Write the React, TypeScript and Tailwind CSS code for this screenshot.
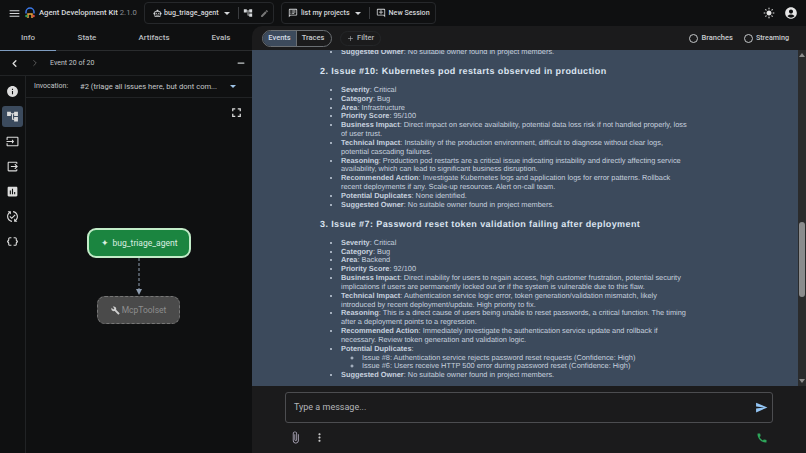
import { ChevronLeft, ChevronRight, Minus, Plus } from 'lucide-react';
import { MdAccountCircle, MdAccountTree, MdAssessment, MdAttachFile, MdBuild, MdCall, MdDataObject, MdEdit, MdFullscreen, MdInfo, MdInput, MdLightMode, MdMenu, MdMoreVert, MdOutlineAddComment, MdOutlineSmartToy, MdOutlineSpeakerNotes, MdOutput, MdPublishedWithChanges, MdSend } from 'react-icons/md';
import type { FC, ReactNode } from 'react';

const Caret: FC<{ className?: string }> = ({ className = '' }) => (
  <span className={`w-0 h-0 border-x-[3px] border-x-transparent border-t-[3px] border-t-current ${className}`} />
);

const Item: FC<{ label: string; text?: string; children?: ReactNode }> = ({ label, text, children }) => (
  <li className="whitespace-pre">
    <b className="font-bold">{label}</b>
    {text ? `: ${text}` : ':'}
    {children}
  </li>
);

const issue10 = [
  ['Severity', 'Critical'],
  ['Category', 'Bug'],
  ['Area', 'Infrastructure'],
  ['Priority Score', '95/100'],
  ['Business Impact', 'Direct impact on service availability, potential data loss risk if not handled properly, loss\nof user trust.'],
  ['Technical Impact', 'Instability of the production environment, difficult to diagnose without clear logs,\npotential cascading failures.'],
  ['Reasoning', 'Production pod restarts are a critical issue indicating instability and directly affecting service\navailability, which can lead to significant business disruption.'],
  ['Recommended Action', 'Investigate Kubernetes logs and application logs for error patterns. Rollback\nrecent deployments if any. Scale-up resources. Alert on-call team.'],
  ['Potential Duplicates', 'None identified.'],
  ['Suggested Owner', 'No suitable owner found in project members.'],
];

const issue7 = [
  ['Severity', 'Critical'],
  ['Category', 'Bug'],
  ['Area', 'Backend'],
  ['Priority Score', '92/100'],
  ['Business Impact', 'Direct inability for users to regain access, high customer frustration, potential security\nimplications if users are permanently locked out or if the system is vulnerable due to this flaw.'],
  ['Technical Impact', 'Authentication service logic error, token generation/validation mismatch, likely\nintroduced by recent deployment/update. High priority to fix.'],
  ['Reasoning', 'This is a direct cause of users being unable to reset passwords, a critical function. The timing\nafter a deployment points to a regression.'],
  ['Recommended Action', 'Immediately investigate the authentication service update and rollback if\nnecessary. Review token generation and validation logic.'],
];

const TopBar = () => (
  <header className="h-[26px] flex items-center text-[#d5d7da] text-[7.7px] font-medium whitespace-nowrap">
    <MdMenu size={13} className="ml-2" />
    <svg width="12" height="12" viewBox="0 0 12 12" fill="none" className="ml-[3px]">
      <path d="M2 6.5V5a4 4 0 0 1 8 0v1.5" stroke="#3b78e7" strokeWidth="1.5" />
      <path d="M4 11V7h4v4" stroke="#e8a33d" strokeWidth="1.5" />
      <circle cx="2.5" cy="9" r="1.3" fill="#2f9e5b" />
      <circle cx="9.5" cy="9" r="1.3" fill="#d64c42" />
    </svg>
    <span className="ml-[3px] w-[105px]">Agent Development Kit <span className="text-[#8b8f94] font-normal">2.1.0</span></span>
    <div className="w-[130px] h-[22px] shrink-0 border border-[#26282b] rounded-[4px] flex items-center pl-[8px] text-[7.1px]">
      <MdOutlineSmartToy size={9} />
      <span className="ml-[2px]">bug_triage_agent</span>
      <Caret className="ml-[5px]" />
      <span className="w-px h-3 bg-[#3a3c3f] ml-[8px]" />
      <MdAccountTree size={10} className="ml-[4px]" />
      <MdEdit size={9} className="ml-[7px] text-[#777]" />
    </div>
    <div className="ml-[7px] w-[155px] h-[22px] shrink-0 border border-[#26282b] rounded-[4px] flex items-center pl-[6px] text-[7.1px]">
      <MdOutlineSpeakerNotes size={10} />
      <span className="ml-[3px]">list my projects</span>
      <Caret className="ml-[5px]" />
      <span className="w-px h-3 bg-[#3a3c3f] ml-[8px]" />
      <MdOutlineAddComment size={10} className="ml-[6px]" />
      <span className="ml-[3px]">New Session</span>
    </div>
    <MdLightMode size={12} className="ml-auto mr-[9px] text-[#e6e6e6]" />
    <MdAccountCircle size={14} className="mr-[8px] text-[#e6e6e6]" />
  </header>
);

const railIcons = [MdInfo, MdAccountTree, MdInput, MdOutput, MdAssessment, MdPublishedWithChanges, MdDataObject];

const LeftPanel = () => (
  <aside className="w-[252px] shrink-0 flex flex-col text-[#c4c7c9]">
    <nav className="h-[25px] flex items-center text-[8px] font-medium border-b border-[#2a2c2e] relative text-[#b9bcbf]">
      <span className="w-[56px] text-center">Info</span>
      <span className="w-[62px] text-center">State</span>
      <span className="w-[72px] text-center">Artifacts</span>
      <span className="w-[62px] text-center">Evals</span>
      <span className="absolute left-0 -bottom-px w-[56px] h-px bg-[#7e9cc0]" />
    </nav>
    <div className="h-[25px] flex items-center border-b border-[#212325]">
      <ChevronLeft size={11} strokeWidth={3} className="ml-[9px] text-[#dcdcdc]" />
      <ChevronRight size={10} className="ml-[10px] text-[#666]" />
      <span className="ml-[10px] text-[7px]">Event 20 of 20</span>
      <Minus size={10} strokeWidth={3} className="ml-auto mr-[6px]" />
    </div>
    <div className="flex-1 flex">
      <div className="w-[26px] border-r border-[#212325] flex flex-col items-center pt-[5px] gap-1">
        {railIcons.map((Icon, i) => (
          <span key={i} className={`w-[21px] h-[21px] flex items-center justify-center rounded-[3px] text-[#dcdcdc] ${i === 1 ? 'bg-[#3b4a5d]' : ''}`}>
            <Icon size={13} />
          </span>
        ))}
      </div>
      <div className="flex-1 flex flex-col min-w-0">
        <div className="h-[22px] flex items-center border-b border-[#212325] text-[7px]">
          <span className="ml-2 w-[46px]">Invocation:</span>
          <span className="text-[7.6px] whitespace-nowrap">#2 (triage all issues here, but dont com...</span>
          <Caret className="ml-auto mr-4 text-[#9ec3e8]" />
        </div>
        <div className="flex-1 flex flex-col relative pt-[130px]">
          <MdFullscreen size={15} className="absolute top-[7px] right-[8px] text-[#dcdcdc]" />
          <div className="ml-[61px] w-[104px] h-[30px] rounded-[9px] bg-[#1b8540] border-[2.5px] border-[#c2ecc8] flex items-center justify-center gap-1 text-[8.5px] text-[#dcefe0]">
            <span className="text-[9px] leading-none">✦</span>bug_triage_agent
          </div>
          <svg width="8" height="38" viewBox="0 0 8 38" className="ml-[109px]">
            <path d="M4 0V33" stroke="#8f9db0" strokeWidth="1" strokeDasharray="3 2" />
            <path d="M1 31l3 6 3-6z" fill="#8f9db0" />
          </svg>
          <div className="ml-[71px] w-[83px] h-[28px] rounded-[8px] bg-[#4a4a4a] border border-dashed border-[#777] flex items-center justify-center gap-0.5 text-[8.5px] text-[#8d8d8d]">
            <MdBuild size={9} className="text-[#cfcfcf]" />McpToolset
          </div>
        </div>
      </div>
    </div>
  </aside>
);

const MainPanel = () => (
  <main className="flex-1 min-w-0 flex flex-col bg-[#1b1b1c] rounded-tl-[10px] overflow-hidden">
    <div className="h-[24px] shrink-0 flex items-center text-[7.5px] font-medium text-[#c9cccf]">
      <div className="ml-[10px] h-[17px] flex items-center border border-[#6b6f73] rounded-full overflow-hidden">
        <span className="h-full w-[34px] flex items-center justify-center bg-[#3c4a5c] border-r border-[#6b6f73] text-[#d6dde6]">Events</span>
        <span className="w-[34px] text-center pr-[2px]">Traces</span>
      </div>
      <span className="ml-2 h-[15px] px-[6px] rounded-full border border-[#242628] flex items-center gap-[3px] text-[#b0b3b6]"><Plus size={7} />Filter</span>
      <span className="ml-auto w-[9px] h-[9px] rounded-full border border-[#c4c7c9]" />
      <span className="ml-[3px]">Branches</span>
      <span className="ml-[11px] w-[9px] h-[9px] rounded-full border border-[#c4c7c9]" />
      <span className="ml-[3px] mr-[17px] text-[7.2px]">Streaming</span>
    </div>
    <div className="h-[336px] shrink-0 flex">
      <div className="flex-1 min-w-0 overflow-hidden bg-[#3c4a5c] text-[#c6d0de] text-[7.38px] leading-[8.85px] [text-rendering:geometricPrecision]" style={{ fontFamily: '"Liberation Sans", sans-serif' }}>
        <div className="-mt-[2px] pl-[68px] pr-[107px]">
          <ul className="list-disc pl-[21px]">
            <Item label="Suggested Owner" text="No suitable owner found in project members." />
          </ul>
          <h3 className="mt-[9px] mb-[9px] font-bold text-[9px] leading-[11px] tracking-[0.4px] text-[#dbe4f0]">2. Issue #10: Kubernetes pod restarts observed in production</h3>
          <ul className="list-disc pl-[21px]">
            {issue10.map(([l, t]) => <Item key={l} label={l} text={t} />)}
          </ul>
          <h3 className="mt-[9px] mb-[9px] font-bold text-[9px] leading-[11px] tracking-[0.4px] text-[#dbe4f0]">3. Issue #7: Password reset token validation failing after deployment</h3>
          <ul className="list-disc pl-[21px]">
            {issue7.map(([l, t]) => <Item key={l} label={l} text={t} />)}
            <Item label="Potential Duplicates">
              <ul className="list-[circle] pl-[21px]">
                <li>Issue #8: Authentication service rejects password reset requests (Confidence: High)</li>
                <li>Issue #6: Users receive HTTP 500 error during password reset (Confidence: High)</li>
              </ul>
            </Item>
            <Item label="Suggested Owner" text="No suitable owner found in project members." />
          </ul>
          <hr className="mt-[6px] border-[#b7bec7]" />
        </div>
      </div>
      <div className="w-[8px] shrink-0 bg-[#2a2b2c] flex flex-col items-center relative">
        <span className="mt-[3px] border-x-[3px] border-x-transparent border-b-[4px] border-b-[#8c8c8c]" />
        <span className="absolute top-[172px] left-[1px] w-[6px] h-[75px] rounded-sm bg-[#8b8c8d]" />
        <span className="mt-auto mb-[3px] border-x-[3px] border-x-transparent border-t-[4px] border-t-[#8c8c8c]" />
      </div>
    </div>
    <div className="flex-1 flex flex-col">
      <div className="mt-[6px] ml-[33px] w-[488px] h-[31px] shrink-0 rounded-[3px] border border-[#4c4d50] flex items-center pl-2 text-[9px] text-[#b4b6b9]">
        Type a message...
        <MdSend size={13} className="ml-auto mr-[4px] text-[#93c5f4]" />
      </div>
      <div className="mt-[8px] flex items-center pl-[37px] pr-[38px] text-[#c8c8c8]">
        <MdAttachFile size={13} className="text-[#b5afc2]" />
        <MdMoreVert size={13} className="ml-[11px]" />
        <MdCall size={12} className="ml-auto text-[#2ea65a]" />
      </div>
    </div>
  </main>
);

export default function App() {
  return (
    <div className="w-[806px] h-[453px] overflow-hidden bg-[#0f1011] flex flex-col" style={{ fontFamily: 'Roboto, sans-serif' }}>
      <TopBar />
      <div className="flex-1 flex min-h-0">
        <LeftPanel />
        <MainPanel />
      </div>
    </div>
  );
}
